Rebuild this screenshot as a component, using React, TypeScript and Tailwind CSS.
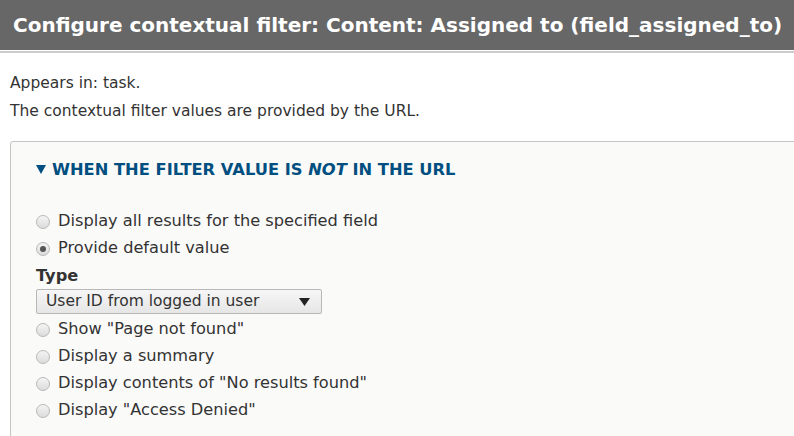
import React from "react";

function Radio({ checked, label }: { checked?: boolean; label: string }) {
  return (
    <div className="flex items-center h-[27px]">
      <span className="w-[14px] h-[14px] rounded-full border border-[#b8b8b8] bg-gradient-to-b from-[#f4f4f4] to-[#dcdcdc] flex items-center justify-center mr-[8px] shrink-0">
        {checked && <span className="w-[6px] h-[6px] rounded-full bg-[#555]" />}
      </span>
      <span>{label}</span>
    </div>
  );
}

export default function App() {
  return (
    <div className="w-[794px] h-[436px] overflow-hidden bg-white text-[#333] text-[15.5px]" style={{ fontFamily: '"DejaVu Sans", sans-serif' }}>
      <div className="h-[50px] bg-[#676767] text-white font-bold text-[20px] flex items-center pl-[13px] whitespace-nowrap">
        Configure contextual filter: Content: Assigned to (field_assigned_to)
      </div>
      <div className="h-px bg-white" />
      <div className="h-[2px] bg-[#cccccc]" />
      <div className="pl-[10px] pt-[16px]">
        <div className="h-[28px] leading-[28px]">Appears in: task.</div>
        <div className="h-[28px] leading-[28px]">The contextual filter values are provided by the URL.</div>
        <div className="mt-[16px] border border-[#c4c4c4] rounded-[3px] bg-[#fafaf9] h-[400px] w-[900px] pl-[25px]">
          <div className="pt-[4px] h-[52px] flex items-center text-[#004f80] font-bold uppercase whitespace-nowrap text-[16.3px]">
            <svg width="10" height="9" viewBox="0 0 10 9" className="mr-[6px] mt-[-1px]">
              <polygon points="0,0 10,0 5,9" fill="#004f80" />
            </svg>
            <span>When the filter value is <em>not</em> in the URL</span>
          </div>
          <div className="pt-[14px] text-[16.2px]">
            <Radio label="Display all results for the specified field" />
            <Radio checked label="Provide default value" />
            <div className="font-bold h-[26px] flex items-end">Type</div>
            <div className="w-[286px] h-[25px] border border-[#b8b8b8] rounded-[2px] bg-gradient-to-b from-[#f6f6f6] to-[#e6e6e6] flex items-center pl-[9px] mt-[1px] mb-[2px] text-[15.5px]">
              <span className="flex-1">User ID from logged in user</span>
              <svg width="11" height="8" viewBox="0 0 11 8" className="mr-[11px]">
                <polygon points="0,0 11,0 5.5,8" fill="#222" />
              </svg>
            </div>
            <Radio label={'Show "Page not found"'} />
            <Radio label="Display a summary" />
            <Radio label={'Display contents of "No results found"'} />
            <Radio label={'Display "Access Denied"'} />
          </div>
        </div>
      </div>
    </div>
  );
}
